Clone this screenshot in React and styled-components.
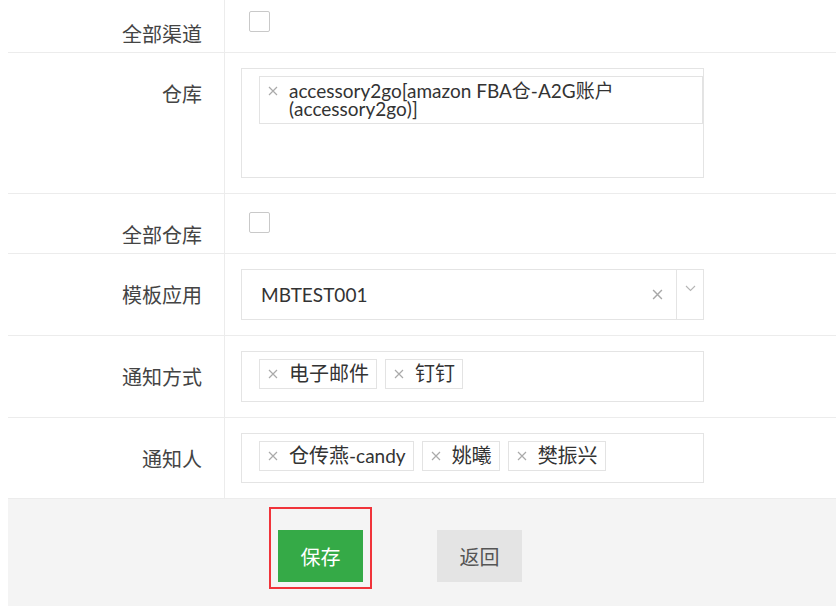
import styled, { createGlobalStyle } from "styled-components";

const GlobalStyle = createGlobalStyle`
  html, body {
    margin: 0;
    padding: 0;
    background: #fff;
    overflow: hidden;
  }
  body {
    font-family: Lato, "Noto Sans CJK SC", sans-serif;
    color: #333;
  }
`;

const Page = styled.div`
  margin-top: -7px;
  padding-left: 8px;
  width: 828px;
`;

const Row = styled.div`
  display: grid;
  grid-template-columns: 217px 1fr;
  border-bottom: 1px solid #ececec;
  min-height: ${(p) => p.$min || 0}px;
`;

const Label = styled.div`
  border-right: 1px solid #ececec;
  text-align: right;
  padding: 31px 22px 0 0;
  font-family: "Noto Sans CJK SC", sans-serif;
  font-size: 20px;
  line-height: 20px;
  color: #444;
`;

const Field = styled.div`
  padding: ${(p) => (p.$check ? "18px 0 0 24px" : "15px 0 15px 16px")};
`;

const Checkbox = styled.div`
  width: 19px;
  height: 19px;
  border: 1.5px solid #c9c9c9;
  border-radius: 2px;
  background: #fff;
`;

const Box = styled.div`
  box-sizing: border-box;
  width: 463px;
  min-height: ${(p) => p.$h || 51}px;
  border: 1px solid #e4e4e4;
  padding: ${(p) => p.$pad || "0"};
  display: flex;
  flex-wrap: wrap;
  align-items: flex-start;
  gap: 0 8px;
`;

const Tag = styled.div`
  display: flex;
  align-items: ${(p) => (p.$multi ? "flex-start" : "center")};
  border: 1px solid #e3e3e3;
  padding: ${(p) => (p.$multi ? "5px 8px" : "4px 7px 5px 8px")};
  font-size: ${(p) => (p.$multi ? "19px" : "20px")};
  line-height: ${(p) => (p.$multi ? "18px" : "19px")};
  color: #333;
  flex: ${(p) => (p.$multi ? "1" : "none")};
`;

const TagX = styled.span`
  display: inline-flex;
  flex: none;
  margin-right: 11px;
  margin-top: ${(p) => (p.$multi ? "4px" : "0")};
`;

const Latin = styled.span`
  font-size: 19px;
`;

const Select = styled.div`
  box-sizing: border-box;
  width: 463px;
  height: 51px;
  border: 1px solid #e4e4e4;
  display: flex;
  align-items: stretch;
`;

const SelectValue = styled.div`
  flex: 1;
  display: flex;
  align-items: center;
  padding-left: 19px;
  font-size: 19px;
  color: #333;
`;

const ClearIcon = styled.div`
  display: flex;
  align-items: center;
  padding: 0 13px;
`;

const Arrow = styled.div`
  width: 26px;
  border-left: 1px solid #e4e4e4;
  display: flex;
  justify-content: center;
  padding-top: 15px;
`;

const Footer = styled.div`
  background: #f4f4f4;
  height: 107px;
  display: flex;
  align-items: flex-start;
  padding: 8px 0 0 261px;
`;

const Highlight = styled.div`
  border: 2px solid #f0333a;
  padding: 21px 7px 5px 7px;
`;

const Button = styled.button`
  width: 85px;
  height: 52px;
  border: none;
  border-radius: 0;
  font-family: "Noto Sans CJK SC", sans-serif;
  font-size: 20px;
  background: ${(p) => (p.$primary ? "#35aa47" : "#e4e4e4")};
  color: ${(p) => (p.$primary ? "#fff" : "#555")};
  margin-left: ${(p) => p.$ml || 0}px;
  margin-top: ${(p) => p.$mt || 0}px;
  cursor: pointer;
`;

const Cross = ({ size = 10, color = "#aaa", w = 1.2 }) => (
  <svg width={size} height={size} viewBox="0 0 10 10">
    <path d="M1 1L9 9M9 1L1 9" stroke={color} strokeWidth={w} />
  </svg>
);

const Chevron = () => (
  <svg width="11" height="7" viewBox="0 0 11 7">
    <path d="M1 1L5.5 5.5L10 1" stroke="#b5b5b5" strokeWidth="1.1" fill="none" />
  </svg>
);

const Chip = ({ children, multi }) => (
  <Tag $multi={multi}>
    <TagX $multi={multi}>
      <Cross />
    </TagX>
    <span>{children}</span>
  </Tag>
);

export default function App() {
  return (
    <>
      <GlobalStyle />
      <Page>
        <Row $min={59}>
          <Label>全部渠道</Label>
          <Field $check>
            <Checkbox />
          </Field>
        </Row>
        <Row>
          <Label>仓库</Label>
          <Field>
            <Box $h={110} $pad="7px 0 7px 17px">
              <Chip multi>
                accessory2go[amazon FBA仓-A2G账户
                <br />
                (accessory2go)]
              </Chip>
            </Box>
          </Field>
        </Row>
        <Row $min={59}>
          <Label>全部仓库</Label>
          <Field $check>
            <Checkbox />
          </Field>
        </Row>
        <Row>
          <Label>模板应用</Label>
          <Field>
            <Select>
              <SelectValue>MBTEST001</SelectValue>
              <ClearIcon>
                <Cross size={11} color="#a8a8a8" w={1.3} />
              </ClearIcon>
              <Arrow>
                <Chevron />
              </Arrow>
            </Select>
          </Field>
        </Row>
        <Row>
          <Label>通知方式</Label>
          <Field>
            <Box $pad="7px 0 0 17px">
              <Chip>电子邮件</Chip>
              <Chip>钉钉</Chip>
            </Box>
          </Field>
        </Row>
        <Row>
          <Label>通知人</Label>
          <Field>
            <Box $h={50} $pad="7px 0 0 17px">
              <Chip>
                仓传燕<Latin>-candy</Latin>
              </Chip>
              <Chip>姚曦</Chip>
              <Chip>樊振兴</Chip>
            </Box>
          </Field>
        </Row>
        <Footer>
          <Highlight>
            <Button $primary>保存</Button>
          </Highlight>
          <Button $ml={65} $mt={23}>返回</Button>
        </Footer>
      </Page>
    </>
  );
}
